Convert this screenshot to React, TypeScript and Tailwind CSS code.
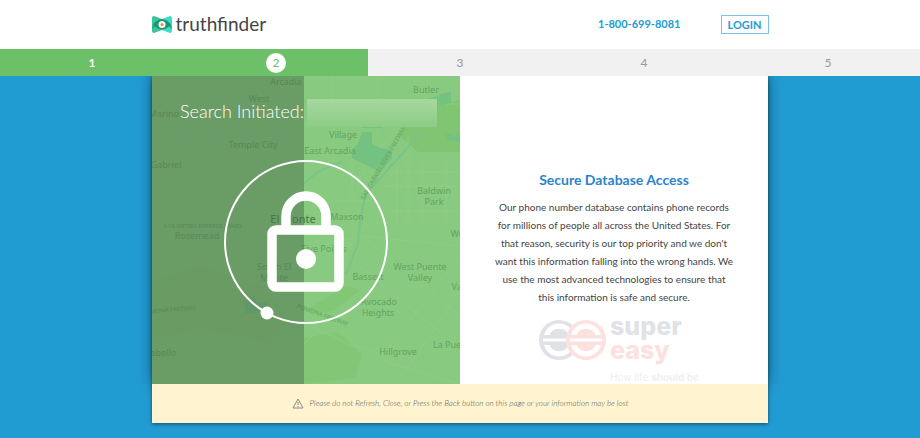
const steps = [1, 2, 3, 4, 5];
const current = 2;

type Label = { x: number; y: number; text: string; size?: number; rotate?: number; dark?: boolean };

const labels: Label[] = [
  { x: 134, y: 9, text: "Arcadia" },
  { x: 107, y: 26, text: "West" },
  { x: 8, y: 41, text: "n Marino" },
  { x: 101, y: 72, text: "Temple City" },
  { x: 14, y: 92, text: "Gabriel" },
  { x: 274, y: 17, text: "Butler" },
  { x: 191, y: 62, text: "Village" },
  { x: 178, y: 78, text: "East Arcadia" },
  { x: 282, y: 118, text: "Baldwin" },
  { x: 282, y: 129, text: "Park" },
  { x: 195, y: 144, text: "Maxson" },
  { x: 141, y: 147, text: "El Monte", size: 11, dark: true },
  { x: 51, y: 152, text: "I-10 METRO EXPRESS LANES", size: 6 },
  { x: 45, y: 163, text: "Rosemead" },
  { x: 172, y: 176, text: "Five Points" },
  { x: 122, y: 194, text: "South El" },
  { x: 122, y: 205, text: "Monte" },
  { x: 216, y: 204, text: "Bassett" },
  { x: 268, y: 194, text: "West Puente" },
  { x: 268, y: 205, text: "Valley" },
  { x: 227, y: 229, text: "Avocado" },
  { x: 226, y: 240, text: "Heights" },
  { x: 246, y: 279, text: "Hillgrove" },
  { x: 302, y: 272, text: "La Puente" },
  { x: 309, y: 161, text: "West" },
  { x: 315, y: 214, text: "Valinda" },
  { x: 0, y: 280, text: "Montebello" },
  { x: 17, y: 236, text: "POMONA FREEWAY", size: 6, rotate: -5 },
  { x: 170, y: 241, text: "POMONA FREEWAY", size: 6, rotate: 20 },
  { x: 233, y: 88, text: "SAN GABRIEL RIVER FREEWAY", size: 6, rotate: -60 },
];

function Map() {
  return (
    <svg viewBox="0 0 308 308" className="block w-full" aria-hidden="true">
      <rect width="308" height="308" fill="#88ca7f" />
      <g fill="#80c672">
        <path d="M256 42q20-12 52-18v52h-42l-18-16z" />
        <path d="M152 262l34-6 24 22-6 24-52 6z" opacity=".7" />
        <path d="M158 232l36-22 14 4-26 20-22 4z" opacity=".8" />
        <path d="M0 205l50-15 60 22 30 34-20 20-70-14-50 10z" opacity=".3" />
      </g>
      <g stroke="#98d290" strokeWidth="1" fill="none" opacity=".45">
        <path d="M0 28h308M0 60h150M0 104h140M0 125h220M30 0v180M62 0v200M96 0v170M128 0v120M180 0v50M226 0v60M256 60v90M200 80v50" />
        <path d="M228 96h80M230 110h78M236 135h72M245 90v60M270 84v66M294 84v66" />
        <path d="M0 170l80-6 70 10 60-14 98 10M210 160l98 80M190 176l118 96M230 280l78-100M250 300l58-84" />
        <path d="M0 240q60-16 110-4t90 34q24 2 34 16l74 22M60 308q16-52 70-110M112 308l60-60" />
        <path d="M205 110q10-30 50-66M130 308l-20-90-60-50" />
      </g>
      <g fill="#74c282">
        <path d="M204 46h30l-4 6h-20zM206 68l4-12h10v12l8 4 12 2 0 8-12 14-16-8-12-6v-8z" />
        <path d="M272 24l14-4 4 6-8 8zM287 18l12-2v10l-10 4zM292 56l10 4 6-2v8l-12-2z" />
        <path d="M91 226l10-6 5 8 10-2-2 8-20 4z" />
      </g>
      <path d="M152 108q12-14 38-22M268 58l-54 60q-6 20-8 50l-12 30" stroke="#74c290" strokeWidth="2" fill="none" opacity=".7" />
      <g fontFamily="'Noto Sans', sans-serif" textAnchor="middle">
        {labels.map((l, i) => (
          <text
            key={i}
            x={l.x}
            y={l.y}
            fontSize={l.size ?? 9}
            fill={l.dark ? "#477a45" : "#64a460"}
            transform={l.rotate ? `rotate(${l.rotate} ${l.x} ${l.y})` : undefined}
          >
            {l.text}
          </text>
        ))}
      </g>
      <rect width="152" height="308" fill="#4c6d4c" opacity=".5" />
      {/* spinner ring and padlock */}
      <circle cx="154" cy="166" r="81" fill="none" stroke="#fff" strokeWidth="2" />
      <circle cx="115" cy="237" r="6.5" fill="#fff" />
      <path d="M134 152v-12a20 20 0 0 1 40 0v12" fill="none" stroke="#fff" strokeWidth="9.5" />
      <rect x="120" y="154" width="67" height="57" rx="4" fill="none" stroke="#fff" strokeWidth="9.5" />
      <circle cx="154" cy="183" r="10" fill="#fff" />
    </svg>
  );
}

function Logo() {
  return (
    <a href="#" className="flex items-center gap-1 text-[#444]">
      <svg viewBox="0 0 20 17" className="h-[17px] w-5" aria-hidden="true">
        <path d="M0 2Q0 0 2 0l8 3v11l-8 3q-2 0-2-2z" fill="#3fc49a" />
        <path d="M20 2q0-2-2-2l-8 3v11l8 3q2 0 2-2z" fill="#3fdccb" />
        <path d="M0 11q4-8 10-8t10 8l-1 2q-4-6-9-6t-9 6z" fill="#25ac87" />
        <path d="M1 8.5q9-10 18 0-9 10-18 0z" fill="#179873" />
        <circle cx="10" cy="8.5" r="3.5" fill="#fff" />
        <circle cx="10" cy="8.5" r="1.5" fill="#f08a3c" />
      </svg>
      <span className="pb-px text-[19px] leading-5">truthfinder</span>
    </a>
  );
}

function Eye({ x, fill }: { x: number; fill: string }) {
  return (
    <g transform={`translate(${x} 24)`}>
      <circle r="20" fill={fill} />
      <path d="M-15-5a15.500 15.500 0 0 1 30 0zM-15 5a15.500 15.500 0 0 0 30 0z" fill="#fff" />
      <path d="M-10-4a10.500 10.500 0 0 1 20 0zM-10 4a10.500 10.500 0 0 0 20 0z" fill={fill} />
      <path d="M-16 0h32" stroke="#fff" strokeWidth="3" />
    </g>
  );
}

function SuperEasy() {
  return (
    <svg viewBox="0 0 170 68" className="block w-[170px]" role="img" aria-label="super easy">
      <Eye x={30} fill="#e1e2e8" />
      <Eye x={57} fill="#fde1df" />
      <g fontFamily="Inter, sans-serif">
        <text x="81" y="19" fontSize="25" fontWeight="800" fill="#e1e2e8">super</text>
        <text x="81" y="43" fontSize="25" fontWeight="800" fill="#fde1df">easy</text>
        <text x="81" y="65" fontSize="10" fill="#f0f0f3">
          How life <tspan fontWeight="700">should be</tspan>
        </text>
      </g>
    </svg>
  );
}

export default function App() {
  return (
    <div className="flex min-h-screen flex-col bg-[#219cd3] font-['Lato',sans-serif]">
      <header className="bg-white">
        <div className="mx-auto flex h-[49px] max-w-[617px] items-center justify-between">
          <Logo />
          <nav className="flex items-center gap-10 text-[11px] font-bold text-[#219cd3]">
            <a href="tel:18006998081">1-800-699-8081</a>
            <button className="h-[19px] w-12 border border-[#7cc4e6] leading-4">LOGIN</button>
          </nav>
        </div>
      </header>

      <ol className="relative z-10 grid grid-cols-5 bg-[#f1f1f1] text-xs">
        {steps.map(n => (
          <li
            key={n}
            className={`flex h-[27px] items-center justify-center ${n <= current ? "bg-[#6cc067] text-white" : "text-[#999]"}`}
          >
            {n === current ? (
              <span className="flex size-5 items-center justify-center rounded-full bg-white text-[#6cc067]">{n}</span>
            ) : (
              <span className={n < current ? "font-bold" : ""}>{n}</span>
            )}
          </li>
        ))}
      </ol>

      <main className="mx-auto w-full max-w-[616px] shadow-[0_1px_4px_rgba(0,0,0,0.5)]">
        <div className="grid grid-cols-2 bg-white shadow-[0_0_14px_rgba(0,0,0,0.4)]">
          <section className="relative">
            <Map />
            <div className="absolute inset-x-0 top-[23px] flex items-start gap-[3px] pl-7">
              <h1 className="text-lg leading-6 font-light whitespace-nowrap text-white">Search Initiated:</h1>
              <div className="h-7 w-[130px] bg-[#88ca7f]">
                <div className="h-full bg-linear-to-b from-white/25 to-white/5" />
              </div>
            </div>
          </section>
          <section className="flex flex-col items-center justify-end text-center">
            <h2 className="text-sm leading-5 font-bold text-[#2a84cc]">Secure Database Access</h2>
            <p className="mt-2 max-w-[240px] text-[10px] leading-[18px] text-[#444]">
              Our phone number database contains phone records for millions of people all across the United States. For
              that reason, security is our top priority and we don't want this information falling into the wrong hands.
              We use the most advanced technologies to ensure that this information is safe and secure.
            </p>
            <div className="mt-[10px]">
              <SuperEasy />
            </div>
          </section>
        </div>
        <p className="relative flex h-[39px] items-center justify-center gap-[6px] bg-[#fff4cf] pb-px text-[8px] font-light text-[#555] italic">
          <svg viewBox="0 0 12 11" className="w-3" fill="none" stroke="#888" aria-hidden="true">
            <path d="M6 1L11 10H1zM6 4v3M6 8v1" />
          </svg>
          Please do not Refresh, Close, or Press the Back button on this page or your information may be lost
        </p>
      </main>
    </div>
  );
}
